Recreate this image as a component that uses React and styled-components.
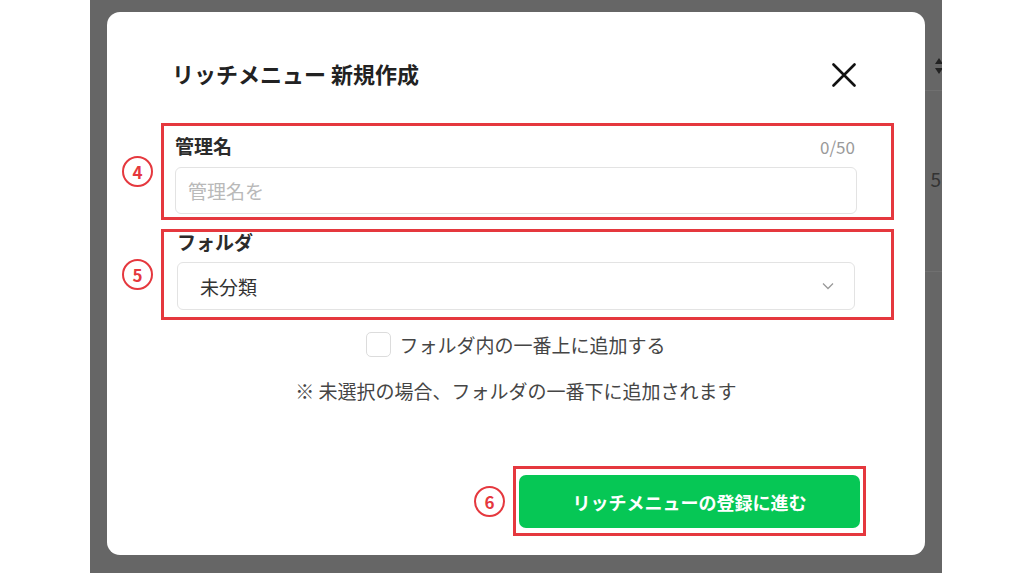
import React from 'react';
import styled, { createGlobalStyle } from 'styled-components';

const GlobalStyle = createGlobalStyle`
  html, body {
    margin: 0;
    padding: 0;
    background: #fff;
  }
  body {
    font-family: "Noto Sans CJK JP", "Noto Sans", sans-serif;
    color: #333;
  }
`;

const RED = '#e5383e';

const Page = styled.div`
  width: 1024px;
  height: 576px;
  overflow: hidden;
  background: #fff;
`;

const Backdrop = styled.div`
  margin-left: 90px;
  width: 852px;
  height: 573px;
  background: #666;
  display: flex;
  box-sizing: border-box;
  padding: 12px 0 0 17px;
`;

const Modal = styled.div`
  width: 818px;
  height: 543px;
  background: #fff;
  border-radius: 13px;
  display: flex;
  flex-direction: column;
  box-sizing: border-box;
  padding-bottom: 19px;
`;

const SideStrip = styled.div`
  width: 17px;
  overflow: hidden;
  display: flex;
  flex-direction: column;
  align-items: flex-end;
`;

const SortArrows = styled.svg`
  margin-top: 45px;
  margin-right: -2px;
`;

const SideLine = styled.div`
  width: 100%;
  height: 1px;
  background: #707070;
  margin-top: ${(p) => p.$top}px;
`;

const SideNumber = styled.span`
  margin-top: 78px;
  margin-right: 1px;
  font-size: 19px;
  line-height: 20px;
  color: #333;
`;

const Header = styled.div`
  display: flex;
  align-items: center;
  justify-content: space-between;
  padding: 46px 69px 0 65px;
`;

const Title = styled.h1`
  margin: 0;
  font-size: 22px;
  line-height: 30px;
  font-weight: 700;
  color: #222;
`;

const CloseButton = styled.button`
  border: none;
  background: none;
  padding: 0;
  width: 24px;
  height: 24px;
  margin-top: 4px;
  display: flex;
  cursor: pointer;
`;

const Annotated = styled.div`
  display: flex;
  align-items: center;
  gap: ${(p) => p.$gap || 8}px;
  margin: ${(p) => p.$margin};
`;

const Marker = styled.span`
  width: 31px;
  height: 31px;
  box-sizing: border-box;
  border: 2.5px solid ${RED};
  border-radius: 50%;
  color: ${RED};
  font-size: 17px;
  font-weight: 700;
  display: flex;
  align-items: center;
  justify-content: center;
  line-height: 1;
  flex-shrink: 0;
`;

const RedBox = styled.div`
  border: 3px solid ${RED};
  box-sizing: border-box;
  width: ${(p) => p.$width}px;
  padding: ${(p) => p.$pad};
  display: flex;
  flex-direction: column;
`;

const LabelRow = styled.div`
  display: flex;
  justify-content: space-between;
  align-items: center;
  height: 20px;
  padding-right: 2px;
  margin-bottom: ${(p) => p.$gap}px;
`;

const Label = styled.span`
  font-size: 19px;
  line-height: 20px;
  font-weight: 700;
  color: #2b2b2b;
`;

const Counter = styled.span`
  font-size: 17px;
  color: #9a9a9a;
`;

const Field = styled.div`
  height: ${(p) => p.$h}px;
  box-sizing: border-box;
  border: 1px solid #e3e3e3;
  border-radius: 6px;
  display: flex;
  align-items: center;
  justify-content: space-between;
  padding: 0 ${(p) => p.$right || 12}px 0 ${(p) => p.$left}px;
  font-size: 19px;
  color: ${(p) => (p.$placeholder ? '#b9b9b9' : '#333')};
`;

const CheckRow = styled.label`
  display: flex;
  align-items: center;
  justify-content: center;
  gap: 8px;
  margin-top: 12px;
  font-size: 19px;
  line-height: 25px;
  color: #454545;
`;

const CheckBox = styled.span`
  width: 25px;
  height: 25px;
  box-sizing: border-box;
  border: 1px solid #dcdcdc;
  border-radius: 5px;
  background: #fff;
`;

const Note = styled.p`
  margin: 21px 0 0;
  text-align: center;
  font-size: 19px;
  line-height: 26px;
  color: #454545;
`;

const Footer = styled.div`
  margin-top: auto;
  display: flex;
  justify-content: flex-end;
  padding-right: 59px;
`;

const SubmitButton = styled.button`
  width: 341px;
  height: 53px;
  border: none;
  border-radius: 7px;
  background: #06c755;
  color: #fff;
  font-family: inherit;
  font-size: 18px;
  font-weight: 700;
  cursor: pointer;
`;

const App = () => (
  <Page>
    <GlobalStyle />
    <Backdrop>
      <Modal>
        <Header>
          <Title>リッチメニュー 新規作成</Title>
          <CloseButton aria-label="閉じる">
            <svg width="24" height="24" viewBox="0 0 24 24">
              <path d="M1.5 1.5 L22.5 22.5 M22.5 1.5 L1.5 22.5" stroke="#111" strokeWidth="2.6" strokeLinecap="round" />
            </svg>
          </CloseButton>
        </Header>

        <Annotated $margin="35px 0 0 15px">
          <Marker>4</Marker>
          <RedBox $width={733} $pad="10px 34px 3px 11px">
            <LabelRow $gap={11}>
              <Label>管理名</Label>
              <Counter>0/50</Counter>
            </LabelRow>
            <Field $h={47} $left={12} $placeholder>管理名を</Field>
          </RedBox>
        </Annotated>

        <Annotated $margin="9px 0 0 15px">
          <Marker>5</Marker>
          <RedBox $width={733} $pad="0 36px 7px 13px">
            <LabelRow $gap={10}>
              <Label>フォルダ</Label>
            </LabelRow>
            <Field $h={48} $left={22} $right={20}>
              未分類
              <svg width="12" height="8" viewBox="0 0 12 8">
                <path d="M1 1.5 L6 6.5 L11 1.5" fill="none" stroke="#9a9a9a" strokeWidth="1.3" />
              </svg>
            </Field>
          </RedBox>
        </Annotated>

        <CheckRow>
          <CheckBox />
          フォルダ内の一番上に追加する
        </CheckRow>
        <Note>※ 未選択の場合、フォルダの一番下に追加されます</Note>

        <Footer>
          <Annotated $gap={8}>
            <Marker>6</Marker>
            <RedBox $pad="6px 3px 5px 3px">
              <SubmitButton>リッチメニューの登録に進む</SubmitButton>
            </RedBox>
          </Annotated>
        </Footer>
      </Modal>

      <SideStrip>
        <SortArrows width="10" height="18" viewBox="0 0 10 18">
          <path d="M5 1 L9 7 L1 7 Z M5 17 L9 11 L1 11 Z" fill="#222" />
        </SortArrows>
        <SideLine $top={15} />
        <SideNumber>5</SideNumber>
        <SideLine $top={82} />
      </SideStrip>
    </Backdrop>
  </Page>
);

export default App;
